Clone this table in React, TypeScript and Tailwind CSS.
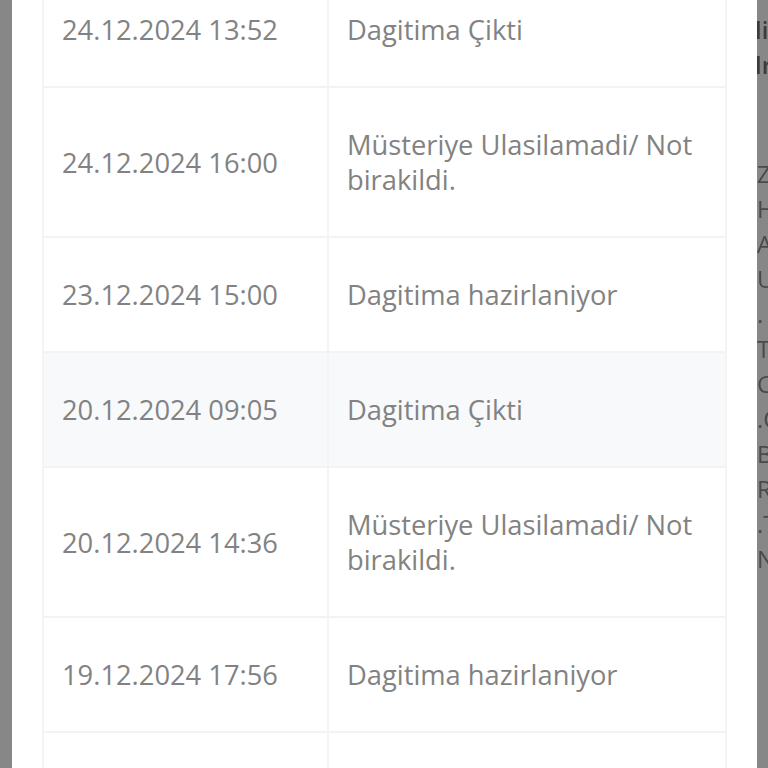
import React from "react";

const rows: { date: string; lines: string[]; hl?: boolean }[] = [
  { date: "24.12.2024 13:52", lines: ["Dagitima Çikti"] },
  { date: "24.12.2024 16:00", lines: ["Müsteriye Ulasilamadi/ Not", "birakildi."] },
  { date: "23.12.2024 15:00", lines: ["Dagitima hazirlaniyor"] },
  { date: "20.12.2024 09:05", lines: ["Dagitima Çikti"], hl: true },
  { date: "20.12.2024 14:36", lines: ["Müsteriye Ulasilamadi/ Not", "birakildi."] },
  { date: "19.12.2024 17:56", lines: ["Dagitima hazirlaniyor"] },
  { date: "", lines: [""] },
];

const bgLinesTop = ["li", "lr"];
const bgLines = ["Z", "H", "A", "U", ".", "T", "C", ".O", "B", "R", ".T", "N", "", ""];

export default function App() {
  return (
    <div
      className="w-[768px] h-[768px] overflow-hidden flex bg-[#878787]"
      style={{ fontFamily: "'Open Sans', sans-serif" }}
    >
      <div className="w-[12px] shrink-0 bg-[#878787]" />
      <div className="w-[745px] shrink-0 bg-white pl-[30px] pr-[30px] overflow-hidden">
        <div className="mt-[-27px] border-l-2 border-r-2 border-[#f4f4f4]">
          {rows.map((r, i) => (
            <div
              key={i}
              className={`grid grid-cols-[283px_398px] border-b-2 border-[#f3f3f3] ${r.hl ? "bg-[#f8f9fb]" : "bg-white"}`}
            >
              <div className="pl-[18px] py-[39px] text-[27.3px] leading-[35px] text-[#828282] flex items-center">
                {r.date || "\u00a0"}
              </div>
              <div className="border-l-2 border-[#f4f4f4] pl-[18px] py-[39px] text-[27.3px] leading-[35px] text-[#828282]">
                {r.lines.map((l, j) => (
                  <div key={j}>{l || "\u00a0"}</div>
                ))}
              </div>
            </div>
          ))}
        </div>
      </div>
      <div className="w-[11px] shrink-0 overflow-hidden bg-[#878787] text-[24px] leading-[35px] text-[#4a4a4a] blur-[0.4px]">
        <div className="pt-[12px] font-semibold ml-[-2px] whitespace-nowrap text-[#3c3c3c]">
          {bgLinesTop.map((t, i) => (
            <div key={i}>{t}</div>
          ))}
        </div>
        <div className="mt-[74px] whitespace-nowrap">
          {bgLines.map((t, i) => (
            <div key={i}>{t || "\u00a0"}</div>
          ))}
        </div>
      </div>
    </div>
  );
}
